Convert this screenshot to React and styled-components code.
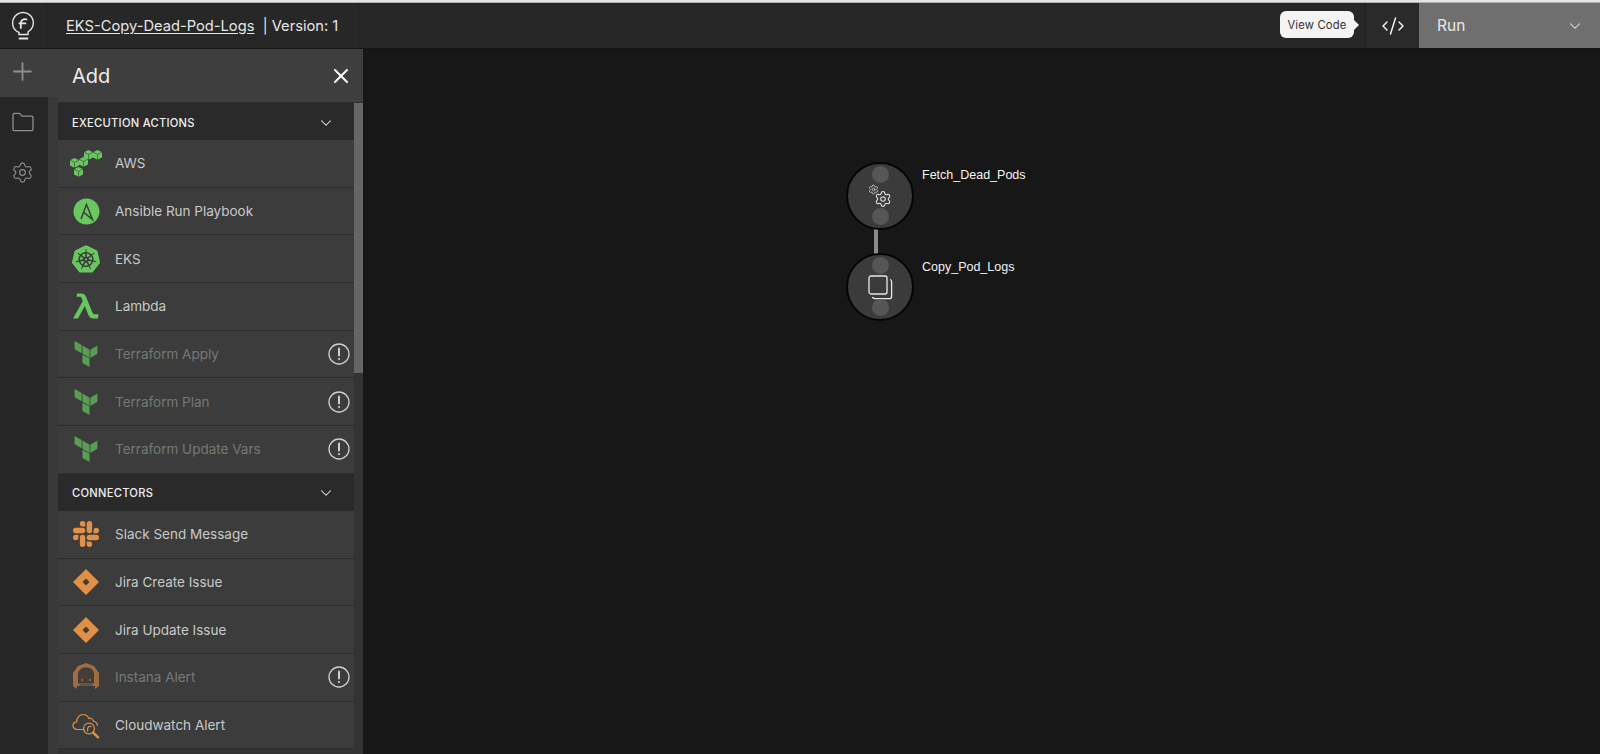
import React from 'react';
import styled, { createGlobalStyle } from 'styled-components';
import { Plus, Settings, X, ChevronDown, CodeXml } from 'lucide-react';
import { SiKubernetes, SiSlack, SiTerraform } from 'react-icons/si';

const GREEN = '#68c85f';
const ORANGE = '#e09146';

const GlobalStyle = createGlobalStyle`
  html, body {
    margin: 0;
    padding: 0;
    height: 100%;
    overflow: hidden;
    background: #171717;
    font-family: Inter, "Liberation Sans", sans-serif;
  }
  * { box-sizing: border-box; }
`;

const Page = styled.div`
  width: 1600px;
  height: 754px;
  display: flex;
  flex-direction: column;
  overflow: hidden;
`;

const TopEdge = styled.div`
  height: 3px;
  flex: none;
  background: linear-gradient(#e4e4e4 0 60%, #8a8a8a 100%);
`;

const Header = styled.header`
  height: 45px;
  flex: none;
  display: flex;
  align-items: stretch;
  background: #272727;
`;

const LogoCell = styled.div`
  width: 47px;
  flex: none;
  display: flex;
  align-items: center;
  justify-content: center;
  border-right: 1px solid #202020;
`;

const TitleCell = styled.div`
  width: 312px;
  flex: none;
  display: flex;
  align-items: center;
  padding-left: 19px;
  font-size: 14.7px;
  color: #e6e6e6;
  border-right: 1px solid #202020;
  white-space: pre;
`;

const WorkflowName = styled.span`
  text-decoration: underline;
  text-underline-offset: 2px;
`;

const HeaderSpacer = styled.div`
  flex: 1;
`;

const CodeButton = styled.div`
  position: relative;
  width: 54px;
  flex: none;
  display: flex;
  align-items: center;
  justify-content: center;
  color: #f0f0f0;
  background: #2a2a2a;
  border-left: 1px solid #222;
`;

const Tooltip = styled.div`
  position: absolute;
  right: 65px;
  top: 8px;
  width: 74px;
  height: 27px;
  display: flex;
  align-items: center;
  justify-content: center;
  background: #f4f4f4;
  color: #333;
  font-size: 11.2px;
  letter-spacing: 0.2px;
  border-radius: 6px;

  &::after {
    content: '';
    position: absolute;
    right: -5px;
    top: 9px;
    border-left: 5px solid #f4f4f4;
    border-top: 5px solid transparent;
    border-bottom: 5px solid transparent;
  }
`;

const RunButton = styled.div`
  width: 181px;
  flex: none;
  display: flex;
  align-items: center;
  justify-content: space-between;
  padding: 0 16px 0 18px;
  background: #6f6f6f;
  color: #e8e8e8;
  font-size: 15.5px;
`;

const Body = styled.div`
  flex: 1;
  min-height: 0;
  display: flex;
  border-top: 1px solid #141414;
`;

const Rail = styled.nav`
  width: 58px;
  flex: none;
  display: flex;
  flex-direction: column;
  background: linear-gradient(90deg, #262626 0 48px, #393939 48px);
`;

const RailTile = styled.div`
  height: 48px;
  flex: none;
  display: flex;
  align-items: center;
  padding: 0 0 3px 8px;
  background: #3e3e3e;
  color: #8f8f8f;
`;

const RailIcon = styled.div`
  width: 45px;
  height: 50px;
  flex: none;
  display: flex;
  align-items: center;
  justify-content: center;
  color: #8f8f8f;
`;

const Panel = styled.aside`
  width: 305px;
  flex: none;
  display: flex;
  flex-direction: column;
  background: #333;
`;

const PanelTitle = styled.div`
  height: 54px;
  flex: none;
  display: flex;
  align-items: center;
  justify-content: space-between;
  padding: 0 10px 0 14px;
  background: #3e3e3e;
  color: #ececec;
  font-size: 20px;
  border-bottom: 1px solid #2d2d2d;
`;

const PanelBody = styled.div`
  position: relative;
  flex: 1;
  min-height: 0;
  padding-right: 9px;
  overflow: hidden;
`;

const ScrollThumb = styled.div`
  position: absolute;
  top: 0;
  right: 0;
  width: 9px;
  height: 270px;
  background: #666;
`;

const SectionHead = styled.div`
  height: 37px;
  display: flex;
  align-items: center;
  justify-content: space-between;
  padding: 2px 19px 0 14px;
  background: #2a2a2a;
  color: #eee;
  font-size: 11.2px;
  font-weight: 500;
  letter-spacing: 0.25px;
`;

const Row = styled.div`
  height: 47.7px;
  display: flex;
  align-items: center;
  padding: 0 4px 0 14px;
  background: #3c3c3c;
  border-bottom: 1px solid #2e2e2e;
  color: ${(p) => (p.$off ? '#777' : '#c9c9c9')};
  font-size: 13.5px;
`;

const RowIcon = styled.div`
  width: 28px;
  height: 28px;
  flex: none;
  margin-right: 15px;
  display: flex;
  align-items: center;
  justify-content: center;
  color: ${(p) => p.$color};
  opacity: ${(p) => (p.$off ? 0.7 : 1)};

  svg {
    flex: none;
  }
`;

const RowLabel = styled.span`
  flex: 1;
`;

const Canvas = styled.main`
  position: relative;
  flex: 1;
  background: #171717;
`;

const Edge = styled.div`
  position: absolute;
  left: 511px;
  top: 178px;
  width: 4px;
  height: 28px;
  background: #8a8a8a;
`;

const Node = styled.div`
  position: absolute;
  left: ${(p) => p.$x}px;
  top: ${(p) => p.$y}px;
  width: 68px;
  height: 68px;
  display: flex;
  align-items: center;
  justify-content: center;
  border-radius: 50%;
  background: #3b3b3b;
  border: 2px solid #050505;
  color: #e8e8e8;
`;

const Port = styled.div`
  position: absolute;
  left: 50%;
  width: 17px;
  height: 17px;
  margin-left: -8.5px;
  border-radius: 50%;
  background: #565656;
  ${(p) => (p.$bottom ? 'bottom: 3px;' : 'top: 2px;')}
`;

const NodeLabel = styled.div`
  position: absolute;
  left: ${(p) => p.$x}px;
  top: ${(p) => p.$y}px;
  color: #f4f4f4;
  font-family: "Liberation Sans", Arial, sans-serif;
  font-size: 12.5px;
`;

const Gears = styled.div`
  position: relative;
  width: 24px;
  height: 24px;
  margin-top: -1px;
`;

const SmallGear = styled(Settings)`
  position: absolute;
  left: 0;
  top: 0;
`;

const BigGear = styled(Settings)`
  position: absolute;
  right: 0;
  bottom: 0;
`;

function Logo() {
  return (
    <svg width="26" height="32" viewBox="0 0 26 32" fill="none" stroke="#e6e6e6" strokeWidth="1.4" strokeLinecap="round">
      <path d="M9 22.5 C4.8 20.8 2.6 17 2.6 13 A10.4 10.4 0 1 1 18 22 L18 24.5 H9 Z" />
      <path d="M16.5 9.4 C13.6 8.6 11.2 10 10.8 13 V18" strokeWidth="1.8" />
      <path d="M9.4 13.4 H15.4" strokeWidth="1.8" />
      <path d="M9.5 28.5 H17.5" strokeWidth="1.8" />
    </svg>
  );
}

function Cube({ x, y }) {
  return (
    <g transform={`translate(${x} ${y})`}>
      <path d="M4.5 0 L9 2.2 L9 7.6 L4.5 9.8 L0 7.6 L0 2.2 Z" fill={GREEN} />
      <path d="M0 2.2 L4.5 4.4 L9 2.2 M4.5 4.4 V9.8" fill="none" stroke="#3c3c3c" strokeWidth="0.6" />
    </g>
  );
}

function AwsIcon() {
  return (
    <svg width="34" height="28" viewBox="0 0 34 28">
      <path d="M15 8 L19 6" stroke={GREEN} strokeWidth="1.4" />
      <Cube x={15} y={1} />
      <Cube x={24} y={1} />
      <Cube x={1} y={9} />
      <Cube x={10} y={8} />
      <Cube x={5} y={18} />
    </svg>
  );
}

function AnsibleIcon() {
  return (
    <svg width="27" height="27" viewBox="0 0 27 27">
      <circle cx="13.5" cy="13.5" r="13" fill={GREEN} />
      <path d="M8 21 L13.5 6.5 L19.5 21.5 L10.5 14.2" fill="none" stroke="#3c3c3c" strokeWidth="1.5" strokeLinejoin="miter" />
    </svg>
  );
}

function LambdaIcon() {
  return (
    <svg width="26" height="26" viewBox="0 0 26 26" fill={GREEN}>
      <path d="M4 0.5 H8.5 C11 0.5 12.2 1.8 13.2 4.2 L19.2 19 C19.9 20.7 20.6 21.3 22 21.3 H25.5 L25 25.5 H20.5 C17.5 25.5 16.3 24.3 15.2 21.6 L11.8 13 L5 25.5 H0 L9.8 8 L8.8 5.4 C8.2 4.1 7.6 3.8 6.4 3.8 H3.6 Z" />
    </svg>
  );
}

function JiraIcon() {
  return (
    <svg width="26" height="26" viewBox="0 0 26 26">
      <path fillRule="evenodd" fill={ORANGE} d="M13 0 L26 13 L13 26 L0 13 Z M13 9.5 L9.5 13 L13 16.5 L16.5 13 Z" />
    </svg>
  );
}

function InstanaIcon() {
  return (
    <svg width="26" height="28" viewBox="0 0 26 28" fill="none">
      <path d="M13 0 L21 3 L26 10 V23 L22 26 V23 H4 V26 L0 23 V10 L5 3 Z" fill="#c98344" />
      <path d="M5.5 20 V11 C5.5 7.5 8.5 5 12 5 H14 C17.5 5 20.5 7.5 20.5 11 V20 Z" fill="#4a4037" stroke="#3c3c3c" />
      <path d="M6.5 22 H19.5" stroke="#3c3c3c" strokeWidth="1" />
      <circle cx="9" cy="17" r="1" fill="#c98344" />
      <circle cx="17" cy="17" r="1" fill="#c98344" />
    </svg>
  );
}

function CloudwatchIcon() {
  return (
    <svg width="28" height="28" viewBox="0 0 28 28" fill="none" stroke={ORANGE} strokeWidth="1.2" strokeLinecap="round">
      <path d="M12 18.5 H5 C2.5 18.5 1 16.5 1 14.5 C1 12.5 2.4 11 4.6 10.8 C4.6 6.5 7.5 3.5 11 3.5 C13.6 3.5 15.8 5 16.8 7.4 C18 6.8 20.6 7.4 21.4 10" />
      <path d="M21.5 10.2 C23.5 10.8 25.4 12.2 25.4 14.5" />
      <circle cx="17" cy="17.5" r="5.4" />
      <path d="M19 15.5 C17.2 15 15.8 15.8 15.6 18 V20" />
      <path d="M21.2 21.6 L26 26.4" strokeWidth="2.4" />
    </svg>
  );
}

function FolderIcon() {
  return (
    <svg width="22" height="20" viewBox="0 0 22 20" fill="none" stroke="currentColor" strokeWidth="1.3">
      <path d="M1 3 C1 2 1.6 1.4 2.6 1.4 H7.6 L10 4.2 H19.6 C20.4 4.2 21 4.8 21 5.6 V17.2 C21 18 20.4 18.6 19.6 18.6 H2.4 C1.6 18.6 1 18 1 17.2 Z" />
    </svg>
  );
}

function CopyIcon() {
  return (
    <svg width="25" height="25" viewBox="0 0 25 25" fill="none" stroke="currentColor" strokeWidth="1.3">
      <rect x="1" y="1" width="18" height="18" rx="2" />
      <path d="M22 4.5 C23 4.8 23.6 5.6 23.6 6.6 V21.4 C23.6 22.8 22.8 23.6 21.4 23.6 H6.6 C5.6 23.6 4.8 23 4.5 22" />
    </svg>
  );
}

function WarnIcon() {
  return (
    <svg width="22" height="22" viewBox="0 0 22 22" fill="none" stroke="#cfcfcf" strokeWidth="1.3">
      <circle cx="11" cy="11" r="10" />
      <path d="M11 5.5 V12.5" strokeWidth="2" strokeLinecap="round" />
      <circle cx="11" cy="16" r="1.1" fill="#cfcfcf" stroke="none" />
    </svg>
  );
}

const executionActions = [
  { name: 'AWS', icon: <AwsIcon />, color: GREEN },
  { name: 'Ansible Run Playbook', icon: <AnsibleIcon />, color: GREEN },
  { name: 'EKS', icon: <SiKubernetes size={28} />, color: GREEN },
  { name: 'Lambda', icon: <LambdaIcon />, color: GREEN },
  { name: 'Terraform Apply', icon: <SiTerraform size={26} />, color: GREEN, off: true },
  { name: 'Terraform Plan', icon: <SiTerraform size={26} />, color: GREEN, off: true },
  { name: 'Terraform Update Vars', icon: <SiTerraform size={26} />, color: GREEN, off: true },
];

const connectors = [
  { name: 'Slack Send Message', icon: <SiSlack size={26} />, color: ORANGE },
  { name: 'Jira Create Issue', icon: <JiraIcon />, color: ORANGE },
  { name: 'Jira Update Issue', icon: <JiraIcon />, color: ORANGE },
  { name: 'Instana Alert', icon: <InstanaIcon />, color: ORANGE, off: true },
  { name: 'Cloudwatch Alert', icon: <CloudwatchIcon />, color: ORANGE },
];

function ItemRow({ item }) {
  return (
    <Row $off={item.off}>
      <RowIcon $color={item.color} $off={item.off}>{item.icon}</RowIcon>
      <RowLabel>{item.name}</RowLabel>
      {item.off && <WarnIcon />}
    </Row>
  );
}

function Section({ title, items }) {
  return (
    <>
      <SectionHead>
        {title}
        <ChevronDown size={18} strokeWidth={1.4} />
      </SectionHead>
      {items.map((item) => (
        <ItemRow key={item.name} item={item} />
      ))}
    </>
  );
}

export default function App() {
  return (
    <Page>
      <GlobalStyle />
      <TopEdge />
      <Header>
        <LogoCell>
          <Logo />
        </LogoCell>
        <TitleCell>
          <WorkflowName>EKS-Copy-Dead-Pod-Logs</WorkflowName>
          {'  | Version: 1'}
        </TitleCell>
        <HeaderSpacer />
        <CodeButton>
          <Tooltip>View Code</Tooltip>
          <CodeXml size={24} strokeWidth={1.5} />
        </CodeButton>
        <RunButton>
          Run
          <ChevronDown size={18} strokeWidth={1.4} />
        </RunButton>
      </Header>
      <Body>
        <Rail>
          <RailTile>
            <Plus size={29} strokeWidth={1.5} />
          </RailTile>
          <RailIcon>
            <FolderIcon />
          </RailIcon>
          <RailIcon>
            <Settings size={23} strokeWidth={1.2} />
          </RailIcon>
        </Rail>
        <Panel>
          <PanelTitle>
            Add
            <X size={24} strokeWidth={2} color="#fff" />
          </PanelTitle>
          <PanelBody>
            <ScrollThumb />
            <Section title="EXECUTION ACTIONS" items={executionActions} />
            <Section title="CONNECTORS" items={connectors} />
          </PanelBody>
        </Panel>
        <Canvas>
          <Edge />
          <Node $x={483} $y={113}>
            <Port />
            <Port $bottom />
            <Gears>
              <SmallGear size={11} strokeWidth={1.4} />
              <BigGear size={18} strokeWidth={1.4} />
            </Gears>
          </Node>
          <NodeLabel $x={559} $y={119}>Fetch_Dead_Pods</NodeLabel>
          <Node $x={483} $y={204}>
            <Port />
            <Port $bottom />
            <CopyIcon />
          </Node>
          <NodeLabel $x={559} $y={211}>Copy_Pod_Logs</NodeLabel>
        </Canvas>
      </Body>
    </Page>
  );
}
